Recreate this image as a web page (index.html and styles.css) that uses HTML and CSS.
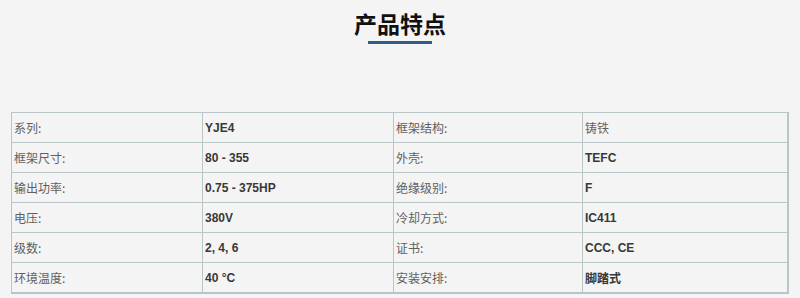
FILE: index.html
```
<!DOCTYPE html>
<html lang="zh-CN">
<head>
<meta charset="utf-8">
<link rel="stylesheet" href="styles.css">
</head>
<body>
<div class="page">
  <div class="heading">
    <h2 class="title">产品特点</h2>
    <div class="title-bar"></div>
  </div>
  <table class="spec">
    <colgroup>
      <col class="c1"><col class="c2"><col class="c3"><col class="c4">
    </colgroup>
    <tbody>
      <tr><td class="lbl">系列:</td><td class="val">YJE4</td><td class="lbl">框架结构:</td><td class="lbl">铸铁</td></tr>
      <tr><td class="lbl">框架尺寸:</td><td class="val">80 - 355</td><td class="lbl">外壳:</td><td class="val">TEFC</td></tr>
      <tr><td class="lbl">输出功率:</td><td class="val">0.75 - 375HP</td><td class="lbl">绝缘级别:</td><td class="val">F</td></tr>
      <tr><td class="lbl">电压:</td><td class="val">380V</td><td class="lbl">冷却方式:</td><td class="val">IC411</td></tr>
      <tr><td class="lbl">级数:</td><td class="val">2, 4, 6</td><td class="lbl">证书:</td><td class="val">CCC, CE</td></tr>
      <tr><td class="lbl">环境温度:</td><td class="val">40 °C</td><td class="lbl">安装安排:</td><td class="val">脚踏式</td></tr>
    </tbody>
  </table>
</div>
</body>
</html>
```
FILE: styles.css
```
html, body {
  margin: 0;
  padding: 0;
  background: #f4f4f4;
}
.page {
  width: 800px;
  height: 298px;
  overflow: hidden;
  font-family: "Liberation Sans", Arial, "Noto Sans CJK SC", sans-serif;
}
.heading {
  display: flex;
  flex-direction: column;
  align-items: center;
  padding-top: 8px;
}
.title {
  margin: 0;
  font-family: "Noto Sans CJK SC", sans-serif;
  font-size: 23px;
  font-weight: 700;
  line-height: 30px;
  color: #111;
}
.title-bar {
  width: 64px;
  height: 3px;
  margin-top: 3px;
  background: #2f5b87;
}
.spec {
  margin: 68px 0 0 11px;
  width: 776px;
  table-layout: fixed;
  border-collapse: collapse;
  border: 2px solid #b9c6c6;
  border-top-width: 1px;
  border-left-width: 1px;
}
.c1 { width: 191px; }
.c2 { width: 191px; }
.c3 { width: 189px; }
.c4 { width: 205px; }
.spec td {
  border: 1px solid #b9c6c6;
  height: 29px;
  padding: 0 2px;
  font-size: 12px;
  vertical-align: middle;
}
.lbl {
  color: #606060;
  font-family: "Noto Sans CJK SC", sans-serif;
  font-weight: 400;
}
.val {
  color: #383838;
  font-weight: 700;
}
```
